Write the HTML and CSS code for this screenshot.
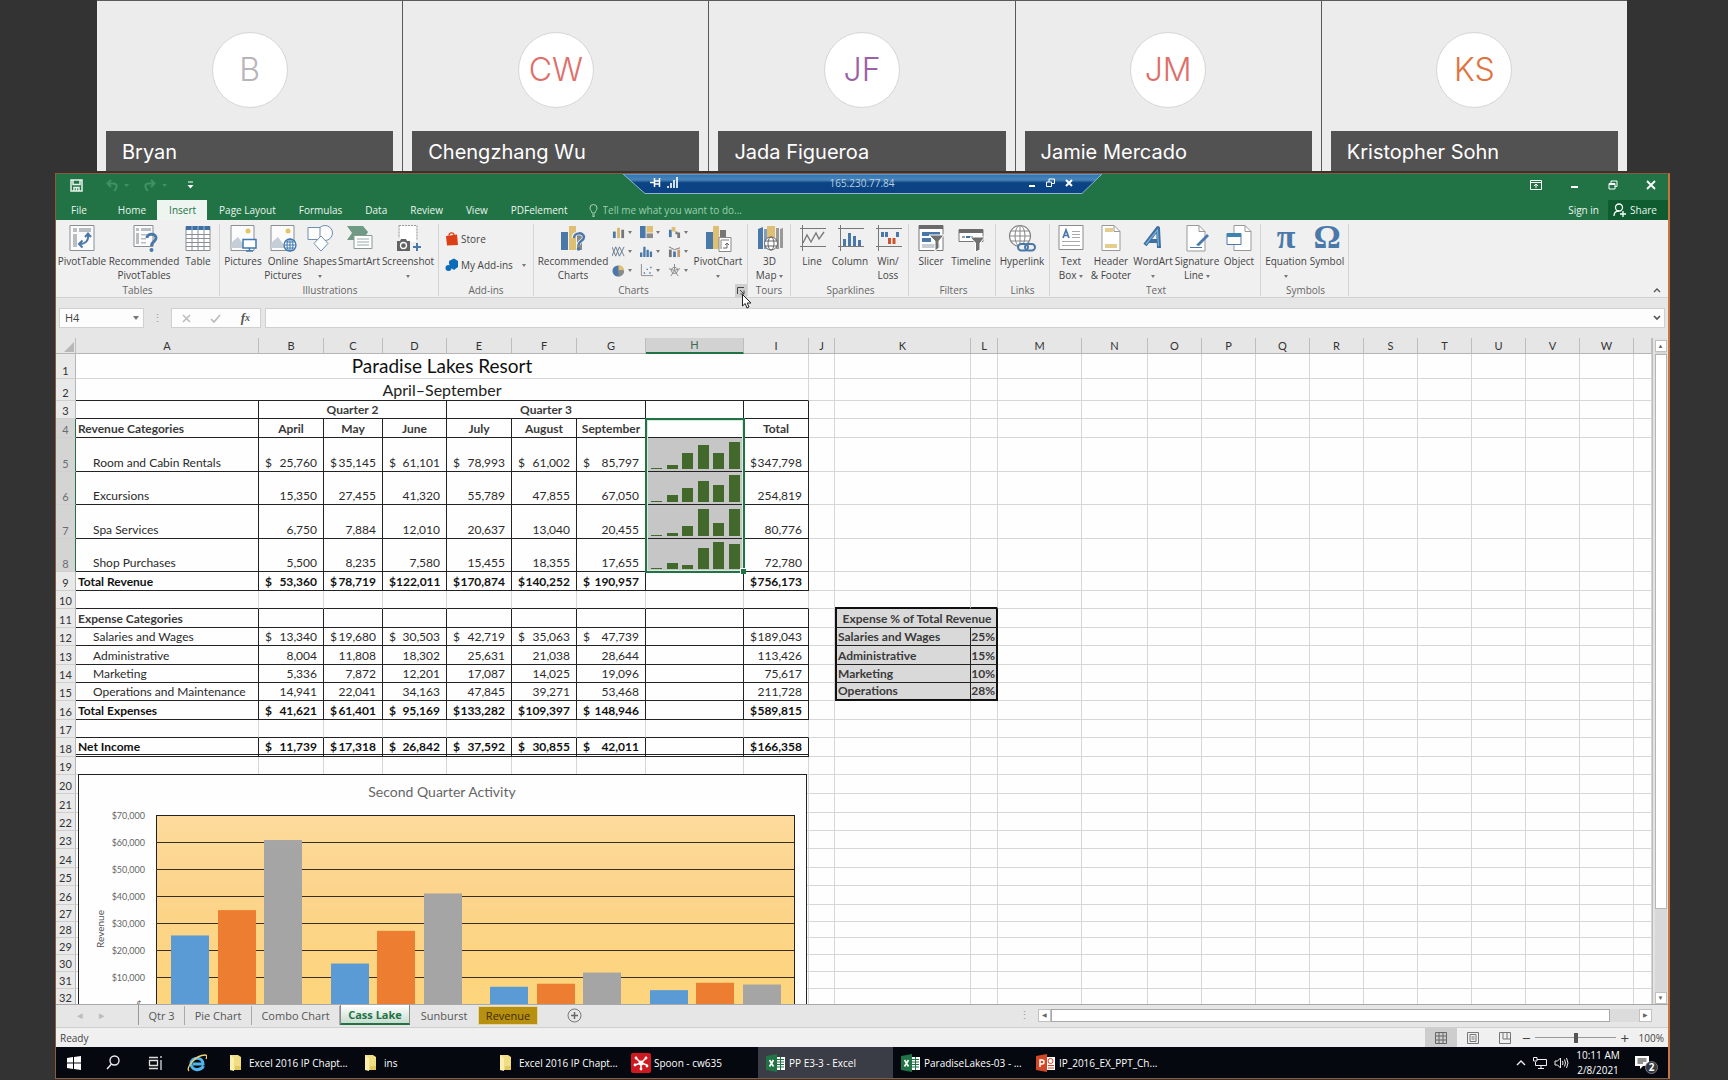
FILE: index.html
```html
<!DOCTYPE html>
<html lang="en">
<head>
<meta charset="utf-8">
<title>Shared screen - PP E3-3 - Excel</title>
<link rel="stylesheet" href="styles.css">
</head>
<body>
<section class="people" aria-label="Participants">
  <article class="person"><div class="avatar grey">B</div><div class="person-name">Bryan</div></article>
  <article class="person"><div class="avatar red">CW</div><div class="person-name">Chengzhang Wu</div></article>
  <article class="person"><div class="avatar purple">JF</div><div class="person-name">Jada Figueroa</div></article>
  <article class="person"><div class="avatar red">JM</div><div class="person-name">Jamie Mercado</div></article>
  <article class="person"><div class="avatar orange">KS</div><div class="person-name">Kristopher Sohn</div></article>
</section>

<main class="desktop">
  <div class="remote-bar">
    <svg class="remote-shape" viewBox="0 0 479 20" preserveAspectRatio="none"><defs><linearGradient id="rdp" x1="0" y1="0" x2="0" y2="1"><stop offset="0" stop-color="#2a74b5"/><stop offset=".3" stop-color="#4a84b8"/><stop offset=".45" stop-color="#0c4383"/><stop offset="1" stop-color="#0b4285"/></linearGradient></defs><path d="M0 0H479L459 19.500H22Z" fill="url(#rdp)" stroke="#8fb3cf" stroke-width="1"/></svg>
    <button class="remote-btn" aria-label="Pin"><svg width="11" height="9" viewBox="0 0 11 9"><path d="M0 4.500H4M4.500 0V9M4 3H9M4 6H9M9.500 0V9" stroke="#fff" stroke-width="1.500" fill="none"/></svg></button>
    <svg class="signal" width="11" height="11" viewBox="0 0 11 11"><path d="M1 11V9M4 11V6M7 11V3M10 11V0" stroke="#e8f0f8" stroke-width="1.800"/></svg>
    <span class="remote-ip">165.230.77.84</span>
    <button class="remote-btn" aria-label="Minimize"><svg width="8" height="8" viewBox="0 0 8 8"><path d="M1 7H7" stroke="#fff" stroke-width="2"/></svg></button>
    <button class="remote-btn" aria-label="Restore"><svg width="9" height="9" viewBox="0 0 9 9"><path d="M.5 4H5.500V8.500H.5ZM3 4V1H8.500V5.500H5.500" fill="none" stroke="#fff"/></svg></button>
    <button class="remote-btn" aria-label="Close"><svg width="8" height="8" viewBox="0 0 8 8"><path d="M1 1L7 7M7 1L1 7" stroke="#fff" stroke-width="2"/></svg></button>
  </div>

  <header class="titlebar">
    <div class="quick">
      <button aria-label="Save"><svg width="13" height="13" viewBox="0 0 13 13"><path d="M1 1H12V12H1ZM3 1V5.500H10V1M4 12V8.500H9V12M6.500 9V12" fill="none" stroke="#e8f3ec" stroke-width="1.500"/></svg></button>
      <button aria-label="Undo" class="undo faint"><svg width="24" height="13" viewBox="0 0 24 13"><path d="M5 1L1.500 4.500L5 8M2 4.500H8C12 5 11 10 8 11.500" fill="none" stroke="currentColor" stroke-width="2"/><path d="M18 5h5l-2.500 3z" fill="currentColor"/></svg></button>
      <button aria-label="Redo" class="redo faint"><svg width="24" height="13" viewBox="0 0 24 13"><path d="M7 1L10.500 4.500L7 8M10 4.500H4C0 5 1 10 4 11.500" fill="none" stroke="currentColor" stroke-width="2"/><path d="M18 5h5l-2.500 3z" fill="currentColor"/></svg></button>
      <button aria-label="Customize"><svg width="7" height="8" viewBox="0 0 7 8"><path d="M1 1H6" stroke="#fff"/><path d="M.5 4h6L3.500 7.500z" fill="#fff"/></svg></button>
    </div>
    <div class="win-controls">
      <button aria-label="Ribbon options"><svg width="12" height="10" viewBox="0 0 12 10"><path d="M.5.5H11.500V9.500H.5ZM.5 2.500H11.500" fill="none" stroke="#fff"/><path d="M6 4V8M4 6L6 4L8 6" fill="none" stroke="#fff"/></svg></button>
      <button aria-label="Minimize"><svg width="10" height="10" viewBox="0 0 10 10"><path d="M1 7H8" stroke="#fff" stroke-width="2"/></svg></button>
      <button aria-label="Restore"><svg width="10" height="10" viewBox="0 0 10 10"><path d="M1 3.500H7V9H1ZM1 4.500H7M3 3V1H9V6.500H7" fill="none" stroke="#fff"/></svg></button>
      <button aria-label="Close"><svg width="10" height="10" viewBox="0 0 10 10"><path d="M1 1L9 9M9 1L1 9" stroke="#fff" stroke-width="1.800"/></svg></button>
    </div>
  </header>

  <nav class="tabs">
    <button class="tab file">File</button><button class="tab">Home</button><button class="tab active">Insert</button><button class="tab">Page Layout</button><button class="tab">Formulas</button><button class="tab">Data</button><button class="tab">Review</button><button class="tab">View</button><button class="tab">PDFelement</button>
    <label class="tell"><svg width="9" height="13" viewBox="0 0 9 13"><path d="M3 9C3 7 1 6.500 1 4A3.500 3.500 0 0 1 8 4C8 6.500 6 7 6 9ZM3 11H6M3.500 12.500H5.500" fill="none" stroke="#a9d5b6"/></svg><input type="text" placeholder="Tell me what you want to do..."></label>
    <a class="signin" href="#">Sign in</a>
    <button class="share"><svg width="13" height="14" viewBox="0 0 13 14"><circle cx="6" cy="4.500" r="3.500" fill="none" stroke="#fff" stroke-width="1.300"/><path d="M1 13C1 10 3 8 6 8M10 8V14M7 11H13" fill="none" stroke="#fff" stroke-width="1.300"/></svg>Share</button>
  </nav>

  <section class="ribbon" aria-label="Insert">
    <div class="group g-tables"><div class="tools">
      <button class="tool w52"><svg viewBox="0 0 28 28"><path d="M2 1.500H26V26.500H2Z" fill="#fbfbfb" stroke="#8a8f94"/><path d="M5 4h4v4H5zM11 4h12v4H11zM5 10h4v13H5z" fill="#b9bec3"/><path d="M20 10C21 16 18 20 12 20M17 13L20 9.500L23 13M14.500 16.500L11 20L14.500 23.500" fill="none" stroke="#4a79a9" stroke-width="2"/></svg><span>PivotTable</span></button>
      <button class="tool w72"><svg viewBox="0 0 28 28"><path d="M4 1.500H23V22.500H4Z" fill="#fbfbfb" stroke="#8a8f94"/><path d="M6 4h3v3H6zM11 4h10v3H11zM6 9h3v11H6zM11 10h6v1.500h-6zM11 14h5v1.500h-5zM11 18h5v1.500h-5z" fill="#b9bec3"/><path d="M17 14C17 9 26 9 26 14C26 18 21.500 17 21.500 22" fill="none" stroke="#4a79a9" stroke-width="3"/><circle cx="21.500" cy="26" r="2" fill="#4a79a9"/></svg><span>Recommended<br>PivotTables</span></button>
      <button class="tool w36"><svg viewBox="0 0 28 28"><path d="M2 2.500H26V26.500H2Z" fill="#fff" stroke="#8a8f94"/><path d="M2 2h24v4H2z" fill="#3e6fa0"/><path d="M2 10.500H26M2 14.500H26M2 18.500H26M2 22.500H26M8 6V26M14 6V26M20 6V26" stroke="#8a8f94"/><path d="M8 2v4M14 2v4M20 2v4" stroke="#9db9d5"/></svg><span>Table</span></button>
    </div><h2>Tables</h2></div>

    <div class="group g-illus"><div class="tools">
      <button class="tool w42"><svg viewBox="0 0 28 28"><path d="M2 1.500H25V26.500H2Z" fill="#fbfbfb" stroke="#8a8f94"/><circle cx="19" cy="7" r="2.500" fill="#e4c467"/><path d="M2 24V19L9 13L17 24Z" fill="#c5cdd6"/><path d="M14 15.500H27V24H14Z" fill="#fff" stroke="#3f78ae" stroke-width="1.500"/><path d="M17 27H24M20.500 24V27" stroke="#3f78ae" stroke-width="1.500"/></svg><span>Pictures</span></button>
      <button class="tool w38"><svg viewBox="0 0 28 28"><path d="M2 1.500H25V26.500H2Z" fill="#fbfbfb" stroke="#8a8f94"/><circle cx="19" cy="7" r="2.500" fill="#e4c467"/><path d="M2 24V19L9 13L17 24Z" fill="#c5cdd6"/><circle cx="21" cy="21" r="6" fill="#fff" stroke="#3f78ae" stroke-width="1.300"/><path d="M15 21H27M21 15V27M16.500 18H25.500M16.500 24H25.500" stroke="#3f78ae"/><ellipse cx="21" cy="21" rx="3" ry="6" fill="none" stroke="#3f78ae"/></svg><span>Online<br>Pictures</span></button>
      <button class="tool w36"><svg viewBox="0 0 28 28"><circle cx="19" cy="9" r="7.500" fill="#fdfdfd" stroke="#6f8fb0"/><path d="M2 3.500H14V15.500H2Z" fill="#fdfdfd" stroke="#6f8fb0"/><path d="M15 12L22 19.500L15 27L8 19.500Z" fill="#fff" stroke="#6f8fb0"/></svg><span>Shapes<br><i class="caret"></i></span></button>
      <button class="tool w42"><svg viewBox="0 0 28 28"><path d="M2 2H18L23 8L18 16H2L7 9Z" fill="#6f9a83"/><path d="M9 11.500H27V24.500H9Z" fill="#fff" stroke="#8a9a92"/><path d="M12 15H24M12 18H24M12 21H24" stroke="#9aa"/></svg><span>SmartArt</span></button>
      <button class="tool w56"><svg viewBox="0 0 28 28"><path d="M5 1.500H23V16" fill="none" stroke="#9a9a9a" stroke-dasharray="2 1"/><path d="M5 1.500V14" stroke="#9a9a9a" stroke-dasharray="2 1"/><path d="M6 2h16v16H6z" fill="#fff"/><path d="M3 17h3l1-2h5l1 2h3v10H3z" fill="#636363"/><circle cx="9.500" cy="21.500" r="3" fill="none" stroke="#fff" stroke-width="1.300"/><path d="M23 19V27M19 23H27" stroke="#4a79a9" stroke-width="2"/></svg><span>Screenshot<br><i class="caret"></i></span></button>
    </div><h2>Illustrations</h2></div>

    <div class="group g-addins"><div class="addins">
      <button><svg width="14" height="14" viewBox="0 0 14 14"><path d="M1 4L12 2.500L13 13L2 13.500Z" fill="#dc3e15"/><path d="M4 3.500C4 0 9 0 9 3" fill="none" stroke="#dc3e15" stroke-width="1.300"/></svg>Store</button>
      <button><svg width="14" height="14" viewBox="0 0 14 14"><path d="M4 3L9 .5L13 3V9L9 12L6 10L4 6Z" fill="#0d6cb9"/><circle cx="3.500" cy="10" r="3" fill="#0d6cb9"/></svg>My Add-ins<i class="caret"></i></button>
    </div><h2>Add-ins</h2></div>

    <div class="group g-charts"><div class="tools">
      <button class="tool w74"><svg viewBox="0 0 28 28"><path d="M2 8h7v18H2z" fill="#4a79a9"/><path d="M10 2h7v24h-7z" fill="#dfbf72"/><path d="M18 8h5v18h-5z" fill="#8a8a8a"/><path d="M14.500 14C14 8 25 8 25 13C25 17 19.500 17 19.500 21" fill="none" stroke="#f0f0f0" stroke-width="4"/><path d="M15 14C15 8 25 8 25 13C25 17 19.500 17 19.500 21" fill="none" stroke="#4a79a9" stroke-width="2.500"/><circle cx="19.500" cy="25" r="1.800" fill="#4a79a9"/></svg><span>Recommended<br>Charts</span></button>
      <div class="mini">
        <button aria-label="Column chart"><svg viewBox="0 0 14 14"><path d="M1 6h3v7H1z" fill="#4a79a9"/><path d="M5.500 2h3v11h-3z" fill="#d9b76a"/><path d="M10 4h3v9h-3z" fill="#777"/></svg><i class="caret"></i></button>
        <button aria-label="Hierarchy chart"><svg viewBox="0 0 14 14"><path d="M0 0h6v13H0z" fill="#4a79a9"/><path d="M7 0h7v7H7z" fill="#dfbf72"/><path d="M7 8h7v5H7z" fill="#8a8a8a"/></svg><i class="caret"></i></button>
        <button aria-label="Waterfall chart"><svg viewBox="0 0 14 14"><path d="M1 4h3v8H1z" fill="#4a79a9"/><path d="M4 1h4v5H4z" fill="#dfbf72"/><path d="M8 6h2v3H8zM10 7h3v6h-3z" fill="#777"/></svg><i class="caret"></i></button>
        <button aria-label="Line chart"><svg viewBox="0 0 14 14"><path d="M0 12L4 2L8 12L13 2" fill="none" stroke="#4a79a9"/><path d="M0 2L4 12L8 2L13 12" fill="none" stroke="#777"/></svg><i class="caret"></i></button>
        <button aria-label="Statistic chart"><svg viewBox="0 0 14 14"><path d="M0 8h2.500v5H0zM3.500 2H6v11H3.500zM7 5h2.500v8H7zM10.500 7H13v6h-2.500z" fill="#4a79a9"/></svg><i class="caret"></i></button>
        <button aria-label="Combo chart"><svg viewBox="0 0 14 14"><path d="M1 5h3v8H1z" fill="#777"/><path d="M5.500 7h3v6h-3z" fill="#4a79a9"/><path d="M10 5h3v8h-3z" fill="#c79a76"/><path d="M1 2L7 5L13 3" fill="none" stroke="#777"/></svg><i class="caret"></i></button>
        <button aria-label="Pie chart"><svg viewBox="0 0 14 14"><circle cx="6.500" cy="7.500" r="6" fill="#4a79a9"/><path d="M7 7V1A6 6 0 0 1 13 7Z" fill="#dfbf72"/><path d="M7 7H13A6 6 0 0 1 7 13.500Z" fill="#8a8a8a"/></svg><i class="caret"></i></button>
        <button aria-label="Scatter chart"><svg viewBox="0 0 14 14"><path d="M1.500 0V12.500H14" fill="none" stroke="#888"/><path d="M4 9h1.500v1.500H4zM7 5h1.500v1.500H7zM11 3h1.500v1.500H11zM10 9h1.500v1.500H10z" fill="#4a79a9"/></svg><i class="caret"></i></button>
        <button aria-label="Radar chart"><svg viewBox="0 0 14 14"><path d="M7 0V7L13 5M7 7L11 13M7 7L3 13M7 7L1 5M7 3L11 6L9 10H5L3 6Z" fill="none" stroke="#888"/></svg><i class="caret"></i></button>
      </div>
      <button class="tool w56"><svg viewBox="0 0 28 28"><path d="M2 8h7v17H2z" fill="#4a79a9"/><path d="M9 2h6v23H9z" fill="#dfbf72"/><path d="M16 6h6v8h-6z" fill="#777"/><path d="M15 13.500H27V27.500H15Z" fill="#fff" stroke="#8a8a8a"/><path d="M17 16h8M17 16v9" stroke="#aaa" stroke-width="1.500"/><path d="M19 24H23V19M21 21L23 19L25 21" fill="none" stroke="#666"/></svg><span>PivotChart<br><i class="caret"></i></span></button>
    </div><h2>Charts</h2>
      <button class="launcher" aria-label="See all charts"><svg width="8" height="8" viewBox="0 0 8 8"><path d="M.5 7V.5H7M3 3L7 7M7 3.500V7H3.500" fill="none" stroke="#444"/></svg></button>
      <svg class="cursor" width="10" height="15" viewBox="0 0 10 15"><path d="M.5.500V12L3.200 9.500L5 14L7 13L5.200 9H9Z" fill="#fff" stroke="#222"/></svg>
    </div>

    <div class="group g-tours"><div class="tools">
      <button class="tool w43"><svg viewBox="0 0 28 28"><path d="M2 5l5-2v22H2z" fill="#4a79a9"/><path d="M8 5h3v20H8z" fill="#7fa0c1"/><path d="M11 2h8v12h-8z" fill="#dfbf72"/><path d="M20 4h3v21h-3zM24 5l3-1v20h-3z" fill="#999"/><circle cx="15" cy="19.500" r="6.500" fill="#fff" stroke="#666"/><ellipse cx="15" cy="19.500" rx="3" ry="6.500" fill="none" stroke="#666"/><path d="M9 17H21M9 22H21" stroke="#666"/></svg><span>3D<br>Map <i class="caret"></i></span></button>
    </div><h2>Tours</h2></div>

    <div class="group g-spark"><div class="tools">
      <button class="tool w38"><svg viewBox="0 0 28 28"><path d="M2 4.500H28M2 22.500H28M4.500 1V27" stroke="#777"/><path d="M5 19L9 11L13 18L18 9L21 15L26 8" fill="none" stroke="#777" stroke-width="1.300"/></svg><span>Line</span></button>
      <button class="tool w38"><svg viewBox="0 0 28 28"><path d="M2 4.500H28M2 22.500H28M4.500 1V27" stroke="#777"/><path d="M7 15h3v7H7zM12 9h3v13h-3zM17 12h3v10h-3zM22 16h3v6h-3z" fill="#4a79a9"/></svg><span>Column</span></button>
      <button class="tool w38"><svg viewBox="0 0 28 28"><path d="M2 4.500H28M2 22.500H28M4.500 1V27" stroke="#777"/><path d="M7 8h3v5H7zM11 8h3v5h-3zM22 8h3v5h-3z" fill="#4a79a9"/><path d="M14 14h3v6h-3zM18.500 14h3v6h-3z" fill="#d0532f"/></svg><span>Win/<br>Loss</span></button>
    </div><h2>Sparklines</h2></div>

    <div class="group g-filters"><div class="tools">
      <button class="tool w38"><svg viewBox="0 0 28 28"><path d="M2 1.500H26V26.500H2Z" fill="#fff" stroke="#777"/><path d="M2 1h24v4H2z" fill="#6a6a6a"/><path d="M5 8h18v4H5zM5 14h9v4H5z" fill="#4a79a9"/><path d="M5 20h18v4H5z" fill="#c8cdd2"/><path d="M12 11H27L22 17V24L18 27V17Z" fill="#6f6f6f" stroke="#fff"/></svg><span>Slicer</span></button>
      <button class="tool w42"><svg viewBox="0 0 28 28"><path d="M2 5.500H26V17.500H2Z" fill="#fff" stroke="#777"/><path d="M2 5h24v4H2z" fill="#6a6a6a"/><path d="M5 12h3v2H5z" fill="#999"/><path d="M9 12h7v2H9z" fill="#3e6fa0"/><path d="M13 13H28L23 19V26L18.500 28V19Z" fill="#6f6f6f" stroke="#fff"/></svg><span>Timeline</span></button>
    </div><h2>Filters</h2></div>

    <div class="group g-links"><div class="tools">
      <button class="tool w52"><svg viewBox="0 0 28 28"><circle cx="12" cy="12" r="10.500" fill="#fff" stroke="#888" stroke-width="1.200"/><ellipse cx="12" cy="12" rx="5" ry="10.500" fill="none" stroke="#888"/><path d="M1.500 12H22.500M12 1.500V22.500M3 7H21M3 17H21" stroke="#888"/><rect x="10" y="20" width="10" height="6.500" rx="3.200" fill="#eee" stroke="#4a79a9" stroke-width="2"/><rect x="17" y="20" width="10" height="6.500" rx="3.200" fill="none" stroke="#4a79a9" stroke-width="2"/></svg><span>Hyperlink</span></button>
    </div><h2>Links</h2></div>

    <div class="group g-text"><div class="tools">
      <button class="tool w38"><svg viewBox="0 0 28 28"><path d="M2 1.500H26V25.500H2Z" fill="#fff" stroke="#8a8a8a"/><path d="M6 14L9 6L12 14M7 11.500H11" fill="none" stroke="#4a79a9" stroke-width="1.700"/><path d="M15 7.500H23M15 10.500H23M15 13.500H23M5 17.500H23M5 21.500H23" stroke="#aaa"/></svg><span>Text<br>Box <i class="caret"></i></span></button>
      <button class="tool w42"><svg viewBox="0 0 28 28"><path d="M5 1.500H17L23 7.500V26.500H5Z" fill="#fff" stroke="#999"/><path d="M17 1.500V7.500H23" fill="none" stroke="#999"/><path d="M8 4h8v4H8zM8 20h12v4H8z" fill="#e5cd8e"/></svg><span>Header<br>&amp; Footer</span></button>
      <button class="tool w42"><svg viewBox="0 0 28 28"><path d="M6 21L19 4L20 24M9 17H20" fill="none" stroke="#3f6fa0" stroke-width="4" stroke-linejoin="round"/><path d="M7 20L18.500 6L19.500 22" fill="none" stroke="#79b2da" stroke-width="1.200"/></svg><span>WordArt<br><i class="caret"></i></span></button>
      <button class="tool w46"><svg viewBox="0 0 28 28"><path d="M4 1.500H16L22 7.500V27H4Z" fill="#fff" stroke="#999"/><path d="M16 1.500V7.500H22" fill="none" stroke="#999"/><path d="M7 23.500H19" stroke="#4a79a9"/><path d="M13 21L24 10L26 12L16 22Z" fill="#4a79a9"/></svg><span>Signature<br>Line <i class="caret"></i></span></button>
      <button class="tool w38"><svg viewBox="0 0 28 28"><path d="M9 1.500H20L26 7.500V26.500H9Z" fill="#fff" stroke="#999"/><path d="M20 1.500V7.500H26" fill="none" stroke="#999"/><path d="M2 9.500H16V20.500H2Z" fill="#fff" stroke="#4a79a9"/><path d="M2 9h14v4H2z" fill="#3c86ae"/></svg><span>Object</span></button>
    </div><h2>Text</h2></div>

    <div class="group g-symbols"><div class="tools">
      <button class="tool w46"><b class="glyph">π</b><span>Equation<br><i class="caret"></i></span></button>
      <button class="tool w36"><b class="glyph">Ω</b><span>Symbol</span></button>
    </div><h2>Symbols</h2></div>
    <button class="collapse" aria-label="Collapse ribbon"><svg width="8" height="6" viewBox="0 0 8 6"><path d="M1 5L4 2L7 5" fill="none" stroke="#555" stroke-width="1.300"/></svg></button>
  </section>

  <div class="formula-row">
    <div class="namebox"><input type="text" value="H4" aria-label="Name box"><i class="caret big"></i></div>
    <span class="grip">⋮</span>
    <div class="fxbox">
      <button aria-label="Cancel"><svg width="9" height="9" viewBox="0 0 9 9"><path d="M1 1L8 8M8 1L1 8" stroke="#bbb" stroke-width="1.500"/></svg></button>
      <button aria-label="Enter"><svg width="11" height="9" viewBox="0 0 11 9"><path d="M1 5L4 8L10 1" fill="none" stroke="#bbb" stroke-width="1.700"/></svg></button>
      <button class="fx" aria-label="Insert function">f<small>x</small></button>
    </div>
    <div class="formula"><input type="text" aria-label="Formula bar"><svg width="8" height="6" viewBox="0 0 8 6"><path d="M1 1L4 4L7 1" fill="none" stroke="#555" stroke-width="1.700"/></svg></div>
  </div>

  <section class="sheet-area">
    <div class="sheet">
      <table id="grid"></table>
      <div class="selection"></div>
      <figure class="chart">
        <svg id="chart" width="729" height="300" viewBox="0 0 729 300"></svg>
      </figure>
    </div>
    <div class="vscroll"><button aria-label="Scroll up">▲</button><div class="vtrack"><div class="vthumb"></div></div><button aria-label="Scroll down">▼</button></div>
  </section>

  <div class="sheet-tabs">
    <span class="navs"><i>◂</i><i>▸</i></span>
    <button class="st w46">Qtr 3</button><button class="st w67">Pie Chart</button><button class="st w88">Combo Chart</button><button class="st w70 current">Cass Lake</button><button class="st w68 plain">Sunburst</button><button class="st w60 gold">Revenue</button>
    <button class="add" aria-label="New sheet"><svg width="15" height="15" viewBox="0 0 15 15"><circle cx="7.500" cy="7.500" r="6.500" fill="none" stroke="#777"/><path d="M7.500 4V11M4 7.500H11" stroke="#666" stroke-width="1.500"/></svg></button>
    <div class="hscroll"><span class="grip">⋮</span><button aria-label="Scroll left">◀</button><div class="htrack"><div class="hthumb"></div></div><button aria-label="Scroll right">▶</button></div>
  </div>

  <div class="status">
    <span class="ready">Ready</span>
    <button class="view on" aria-label="Normal"><svg width="12" height="12" viewBox="0 0 12 12"><path d="M.5.500H11.500V11.500H.5ZM.5 4H11.500M.5 8H11.500M4 .5V11.500M8 .5V11.500" fill="none" stroke="#666"/></svg></button>
    <button class="view" aria-label="Page layout"><svg width="12" height="12" viewBox="0 0 12 12"><path d="M.5.500H11.500V11.500H.5ZM3 2.500H9V9.500H3ZM4.500 5H7.500M4.500 7H7.500" fill="none" stroke="#777"/></svg></button>
    <button class="view" aria-label="Page breaks"><svg width="12" height="12" viewBox="0 0 12 12"><path d="M.5.500H11.500V11.500H.5ZM4 .5V7H11.500M8 .5V7" fill="none" stroke="#777"/></svg></button>
    <div class="zoomer"><span>−</span><input type="range" min="10" max="190" value="100" aria-label="Zoom"><span>+</span></div>
    <span class="pct">100%</span>
  </div>

  <footer class="taskbar">
    <button class="tk" aria-label="Start"><svg width="14" height="14" viewBox="0 0 14 14"><path d="M0 2L6 1V6.500H0ZM7 1L14 0V6.500H7ZM0 7.500H6V13L0 12ZM7 7.500H14V14L7 13Z" fill="#fff"/></svg></button>
    <button class="tk" aria-label="Search"><svg width="14" height="15" viewBox="0 0 14 15"><circle cx="8.500" cy="5.500" r="4.500" fill="none" stroke="#eee" stroke-width="1.400"/><path d="M5.500 9L1 14" stroke="#eee" stroke-width="1.400"/></svg></button>
    <button class="tk" aria-label="Task view"><svg width="15" height="14" viewBox="0 0 15 14"><path d="M1 1.500H10M1 12.500H10M1.500 4.500H9.500V9.500H1.500ZM13 4V14M13 0V2" fill="none" stroke="#ddd" stroke-width="1.300"/></svg></button>
    <button class="tk" aria-label="Internet Explorer"><svg width="20" height="20" viewBox="0 0 20 20"><path d="M16.500 13C13 19 4 17 4 10.500C4 4 16 3 16 11H6" fill="none" stroke="#4fb5ea" stroke-width="3"/><path d="M2 18C-1 15 8 2 18 2C20 2 20 4 19 6" fill="none" stroke="#f0d269" stroke-width="1.300"/></svg></button>
    <button class="task"><svg viewBox="0 0 20 20"><path d="M4 2h8l3 2v13H4z" fill="#f1dd84"/><path d="M4 2l4 3v13l-4-1z" fill="#fbefb0"/><path d="M9 13h6v4H9z" fill="#e5c85e"/></svg><span>Excel 2016 IP Chapt...</span></button>
    <button class="task"><svg viewBox="0 0 20 20"><path d="M4 2h8l3 2v13H4z" fill="#f1dd84"/><path d="M4 2l4 3v13l-4-1z" fill="#fbefb0"/><path d="M9 13h6v4H9z" fill="#e5c85e"/></svg><span>ins</span></button>
    <button class="task"><svg viewBox="0 0 20 20"><path d="M4 2h8l3 2v13H4z" fill="#f1dd84"/><path d="M4 2l4 3v13l-4-1z" fill="#fbefb0"/><path d="M9 13h6v4H9z" fill="#e5c85e"/></svg><span>Excel 2016 IP Chapt...</span></button>
    <button class="task"><svg viewBox="0 0 20 20"><rect width="20" height="20" rx="2" fill="#cf1820"/><path d="M10 10L5 5M10 10L15 5M10 10L4 12M10 10L16 12M10 10L10 16" stroke="#fff" stroke-width="1.500"/><circle cx="10" cy="10" r="2.500" fill="#fff"/><circle cx="5" cy="5" r="1.400" fill="#fff"/><circle cx="15" cy="5" r="1.400" fill="#fff"/><circle cx="4" cy="12" r="1.400" fill="#fff"/><circle cx="16" cy="13" r="1.400" fill="#fff"/><circle cx="10" cy="16" r="1.400" fill="#fff"/></svg><span>Spoon - cw635</span></button>
    <button class="task on"><svg viewBox="0 0 20 20"><path d="M10 4h9v13h-9z" fill="#fff"/><path d="M11 6.500H18M11 9H18M11 11.500H18M11 14H18M14.500 4V17" stroke="#217346"/><path d="M0 3L11 1V19L0 17Z" fill="#217346"/><path d="M3.500 7L7.500 13.500M7.500 7L3.500 13.500" stroke="#fff" stroke-width="1.600"/></svg><span>PP E3-3 - Excel</span></button>
    <button class="task"><svg viewBox="0 0 20 20"><path d="M10 4h9v13h-9z" fill="#fff"/><path d="M11 6.500H18M11 9H18M11 11.500H18M11 14H18M14.500 4V17" stroke="#217346"/><path d="M0 3L11 1V19L0 17Z" fill="#217346"/><path d="M3.500 7L7.500 13.500M7.500 7L3.500 13.500" stroke="#fff" stroke-width="1.600"/></svg><span>ParadiseLakes-03 - ...</span></button>
    <button class="task"><svg viewBox="0 0 20 20"><path d="M10 4h9v13h-9z" fill="#fff"/><path d="M12 12.500H18M12 15H18" stroke="#d24726"/><circle cx="14.500" cy="8" r="2.500" fill="none" stroke="#d24726"/><path d="M0 3L11 1V19L0 17Z" fill="#d24726"/><path d="M4 14V7H6A2 2 0 0 1 6 11H4" fill="none" stroke="#fff" stroke-width="1.500"/></svg><span>IP_2016_EX_PPT_Ch...</span></button>
    <div class="tray">
      <svg width="10" height="6" viewBox="0 0 10 6"><path d="M1 5L5 1L9 5" fill="none" stroke="#eee" stroke-width="1.400"/></svg>
      <svg width="14" height="12" viewBox="0 0 14 12"><path d="M4 2.500H13.500V8.500H2.500V5M8 8.500V11.500M5 11.500H11M.5.500H4V4H.5Z" fill="none" stroke="#eee"/></svg>
      <svg width="15" height="12" viewBox="0 0 15 12"><path d="M1 4H3.500L6.500 1V11L3.500 8H1ZM8.500 4Q9.500 6 8.500 8M10.500 2.500Q12.500 6 10.500 9.500M12.500 1Q15.500 6 12.500 11" fill="none" stroke="#eee"/></svg>
      <time>10:11 AM<br>2/8/2021</time>
      <span class="notes"><svg width="14" height="14" viewBox="0 0 14 14"><path d="M0 0H14V10H8L5 13V10H0Z" fill="#fff"/><path d="M2.500 3H11.500M2.500 5H11.500M2.500 7H8" stroke="#222"/></svg><b>2</b></span>
    </div>
  </footer>
</main>
<script src="app.js"></script>
</body>
</html>
```

FILE: styles.css
```css
* { box-sizing: border-box; }
body {
  margin: 0;
  height: 100vh;
  min-height: 720px;
  display: flex;
  flex-direction: column;
  overflow: hidden;
  background: #333;
  font: 11px/14px "Open Sans", "Noto Sans", sans-serif;
  color: #444;
}
button {
  border: 0;
  padding: 0;
  background: none;
  font: inherit;
  color: inherit;
  display: flex;
  align-items: center;
  justify-content: center;
}
input { font: inherit; color: inherit; border: 0; outline: 0; background: none; padding: 0; min-width: 0; }
svg { flex: none; }
.caret {
  display: inline-block;
  width: 0;
  height: 0;
  border: 2px solid transparent;
  border-top: 3px solid #777;
  border-bottom: 0;
  vertical-align: middle;
}
.caret.big { border-width: 4px 3px 0; }

/* participants */
.people { display: flex; gap: 1px; height: 171px; flex: none; margin: 0 101px 2px 97px; padding-top: 1px; background: #5b5959; }
.person { flex: 1; display: flex; flex-direction: column; align-items: center; justify-content: space-between; background: #ececec; padding: 31px 9px 0; }
.avatar {
  width: 76px; height: 76px;
  border: 1px solid #d8d4d8; border-radius: 50%;
  background: #fff;
  display: flex; align-items: center; justify-content: center;
  font: 300 32px/40px Inter, "Liberation Sans", sans-serif;
}
.grey { color: #b9b4ba; }
.red { color: #de6f6b; }
.purple { color: #9a62a4; }
.orange { color: #e07440; }
.person-name { align-self: stretch; height: 40px; background: #535253; color: #fff; font: 20px/42px Inter, "Liberation Sans", sans-serif; padding-left: 16px; }

/* remote desktop window */
.desktop {
  position: relative;
  flex: 1;
  min-height: 0;
  display: flex;
  flex-direction: column;
  margin: 0 58px 1px 55px;
  border: 1px solid #8c5a3c;
  border-right: 2px solid #c9743d;
  background: #e6e6e6;
}
.remote-bar {
  position: absolute;
  z-index: 2;
  left: 50%;
  top: 0;
  width: 479px;
  height: 20px;
  margin-left: -239px;
  padding: 0 29px 3px 27px;
  display: flex;
  align-items: center;
  gap: 10px;
}
.remote-shape { position: absolute; inset: 0; width: 100%; height: 100%; }
.remote-bar > :not(.remote-shape) { position: relative; }
.remote-ip { flex: 1; text-align: center; font-size: 10px; color: #b9cfe4; padding-left: 18px; }
.signal { margin-left: -4px; }

.titlebar { height: 26px; flex: none; display: flex; justify-content: space-between; background: #217346; padding: 0 12px 4px 14px; }
.quick, .win-controls { display: flex; align-items: center; }
.faint { color: #3f9162; }
.undo { margin-left: 23px; }
.redo { margin: 0 19px 0 14px; }
.win-controls { gap: 28px; }

.tabs { height: 20px; flex: none; display: flex; background: #217346; color: #e9f5ed; font-size: 10px; }
.tab { padding: 0 11px 0 12px; }
.tab.file { padding: 0 19px 0 15px; }
.tab.active { background: #eef4f0; color: #217346; }
.tell { display: flex; flex: 1; align-items: center; gap: 5px; padding-left: 10px; }
.tell input { flex: 1; }
.tell input::placeholder { color: #9ccfab; opacity: 1; }
.signin { color: inherit; text-decoration: none; line-height: 20px; margin-right: 9px; }
.share { width: 60px; gap: 4px; background: #0e5c2f; padding-right: 6px; }

/* ribbon */
.ribbon { height: 78px; flex: none; display: flex; background: #f0f0f0; border-bottom: 1px solid #d2d2d2; padding-top: 4px; position: relative; }
.group { position: relative; display: flex; flex-direction: column; justify-content: space-between; border-right: 1px solid #d5d5d5; margin-bottom: 1px; flex: none; }
.group h2 { margin: 0; font-size: 10px; line-height: 11px; font-weight: 400; color: #666; text-align: center; }
.g-tables { width: 164px; }
.g-illus { width: 219px; padding-left: 2px; }
.g-addins { width: 95px; }
.g-charts { width: 214px; padding-left: 2px; }
.g-charts h2 { padding-right: 16px; }
.g-tours { width: 43px; }
.g-spark { width: 118px; padding-left: 2px; }
.g-filters { width: 87px; padding-left: 3px; }
.g-links { width: 54px; }
.g-text { width: 211px; padding-left: 2px; }
.g-symbols { width: 88px; padding-left: 2px; }
.tools { display: flex; align-items: flex-start; }
.tool { flex-direction: column; justify-content: flex-start; white-space: nowrap; flex: none; }
.tool svg { width: 28px; height: 28px; }
.tool span { line-height: 14px; margin-top: 2px; font-size: 10px; }
.glyph { height: 28px; font: 700 34px/26px "Liberation Serif", serif; color: #4a79a9; }
.w36 { width: 36px; } .w38 { width: 38px; } .w42 { width: 42px; } .w43 { width: 43px; } .w46 { width: 46px; }
.w52 { width: 52px; } .w56 { width: 56px; } .w72 { width: 72px; } .w74 { width: 74px; }
.addins { display: flex; flex-direction: column; align-items: flex-start; gap: 12px; padding: 8px 0 0 6px; font-size: 10px; }
.addins button { gap: 2px; }
.addins .caret { margin-left: 7px; }
.mini { display: grid; grid-template-columns: repeat(3, 28px); grid-auto-rows: 19px; width: 80px; padding: 2px 0 0 2px; }
.mini button { justify-content: flex-start; align-items: flex-start; gap: 3px; }
.mini svg { width: 13px; height: 13px; }
.mini .caret { margin-top: 5px; }
.launcher { position: absolute; right: 0; bottom: -1px; width: 12px; height: 13px; background: #cfcfcf; }
.cursor { position: absolute; z-index: 3; right: -5px; bottom: -13px; }
.collapse { position: absolute; right: 7px; bottom: 4px; }

.formula-row { flex: none; display: flex; padding: 10px 3px 10px; background: #e6e6e6; }
.formula-row > div { height: 20px; background: #fdfdfd; border: 1px solid #d0d0d0; display: flex; align-items: center; }
.namebox { width: 85px; padding: 0 4px 0 5px; }
.namebox input { flex: 1; }
.grip { width: 27px; text-align: center; color: #999; line-height: 20px; }
.fxbox { width: 90px; padding: 0 10px 0 10px; justify-content: space-between; margin-right: 4px; }
.fx { font: italic 700 13px/16px "Liberation Serif", serif; color: #555; }
.fx small { font-size: 10px; }
.formula { flex: 1; padding-right: 3px; }
.formula input { flex: 1; }

/* grid */
.sheet-area { flex: 1; min-height: 0; display: flex; background: #e6e6e6; }
.sheet { position: relative; flex: 1; overflow: hidden; }
table { border-collapse: separate; border-spacing: 0; table-layout: fixed; width: 100%; font: 12px/16px Lato, "Open Sans", sans-serif; color: #2b2b2b; background: #fefefe; }
th, td { padding: 0; white-space: nowrap; overflow: hidden; vertical-align: bottom; border-right: 1px solid #d6d6d6; border-bottom: 1px solid #d6d6d6; }
thead th { height: 16px; font-size: 11px; line-height: 15px; font-weight: 400; background: #e6e6e6; color: #333; border-right-color: #bdbdbd; border-bottom-color: #b5b5b5; }
tbody th { font-size: 11px; line-height: 15px; font-weight: 400; background: #e9e9e9; color: #333; border-right-color: #b5b5b5; border-bottom-color: #cfcfcf; }
thead th.sel { background: #d2d2d2; color: #3c6b50; border-bottom: 2px solid #217346; line-height: 14px; }
tbody th.sel { background: #d4d4d4; color: #6a6f6c; border-right-color: #217346; }
.corner { position: relative; }
.corner svg { display: block; margin-left: 8px; }
.box { border-right-color: #222; border-bottom-color: #222; }
.under { border-bottom-color: #222; }
.double { border-bottom: 3px double #222; line-height: 15px; }
.bold { font-weight: 700; color: #111; }
.semi { font-weight: 700; color: #3a3a3a; }
.center { text-align: center; }
.label { padding-left: 2px; }
.indent { padding-left: 17px; }
.num { text-align: right; padding-right: 6px; }
.money { display: flex; justify-content: space-between; padding-left: 6px; }
.title { text-align: center; font-size: 19px; line-height: 24px; color: #111; }
.subtitle { text-align: center; font-size: 16px; line-height: 21px; color: #222; }
.filled { background: #c6c6c6; }
.filled svg { display: block; }
.pk { background: #d9d9d9; border-left: 2px solid #111; padding-left: 1px; }
.pl { background: #d9d9d9; border-right: 2px solid #111; text-align: right; padding-right: 1px; }
.pover { border-bottom: 2px solid #111; }
.ptop { border-right: 2px solid #111; text-align: center; }
.pend { border-bottom: 2px solid #111; }
.selection { position: absolute; left: 589px; top: 80px; width: 100px; height: 155px; border: 2px solid #217346; box-shadow: inset 0 0 0 1px #d5eadd; }
.selection::after { content: ""; position: absolute; right: -3px; bottom: -3px; width: 5px; height: 5px; background: #217346; border: 1px solid #fff; border-width: 1px 0 0 1px; }
.chart { position: absolute; left: 22px; top: 436px; margin: 0; }
.chart svg { display: block; font-family: Lato, "Open Sans", sans-serif; }

.vscroll { width: 16px; flex: none; display: flex; flex-direction: column; align-items: center; padding-top: 2px; border-left: 1px solid #bbb; background: #e3e3e3; }
.vscroll button, .hscroll button { width: 12px; height: 12px; background: #fff; border: 1px solid #c0c0c0; font-size: 6px; line-height: 8px; color: #666; flex: none; }
.vtrack { flex: 1; width: 12px; padding-top: 2px; background: #d8d8d8; }
.vthumb { height: 87%; background: #fff; border: 1px solid #b5b5b5; }

.sheet-tabs { height: 24px; flex: none; display: flex; align-items: stretch; background: #e6e6e6; border-top: 1px solid #a8a8a8; border-bottom: 1px solid #cfcfcf; padding-bottom: 2px; }
.navs { width: 83px; display: flex; gap: 16px; justify-content: flex-end; align-items: center; padding-right: 33px; border-right: 1px solid #999; color: #bbb; }
.navs i { font-style: normal; }
.st { border-right: 1px solid #aaa; color: #555; flex: none; margin: 1px 0 0; }
.w67 { width: 67px; } .w88 { width: 88px; } .w70 { width: 70px; } .w68 { width: 68px; } .w60 { width: 60px; }
.current { margin: 0; font-weight: 700; color: #217346; background: linear-gradient(#fff, #c9dccf); border: 1px solid #888; border-bottom: 2px solid #217346; border-top: 0; padding-top: 1px; }
.plain { border-right: 0; }
.gold { background: #b8900f; color: #3d2c00; border: 1px solid #e3d5a4; }
.add { margin-left: 29px; }
.hscroll { margin-left: auto; width: 657px; display: flex; align-items: center; padding-right: 16px; }
.hscroll button { width: 13px; height: 13px; }
.hscroll .grip { width: 27px; }
.htrack { flex: 1; height: 13px; background: #dcdcdc; }
.hthumb { height: 13px; width: 95%; background: #fff; border: 1px solid #a8a8a8; }

.status { height: 19px; flex: none; display: flex; align-items: center; background: #f0f0f0; padding: 0 4px; font-size: 10px; }
.ready { flex: 1; }
.view { width: 32px; height: 19px; }
.view.on { background: #cdcdcd; }
.zoomer { display: flex; align-items: center; width: 107px; gap: 2px; font-size: 15px; margin-left: 1px; margin-right: 1px; }
.zoomer input { flex: 1; appearance: none; height: 1px; background: #999; }
.zoomer input::-webkit-slider-thumb { appearance: none; width: 4px; height: 10px; background: #555; }
.pct { width: 34px; text-align: right; }

.taskbar { height: 31px; flex: none; display: flex; background: #05080f; color: #fff; font-size: 10px; }
.tk { width: 42px; }
.tk:first-child { width: 36px; }
.task { width: 135px; flex: 0 1 135px; justify-content: flex-start; padding-left: 8px; gap: 3px; white-space: nowrap; overflow: hidden; }
.task svg { width: 20px; height: 20px; }
.task.on { background: #3a3d45; }
.tray { margin-left: auto; display: flex; align-items: center; gap: 7px; padding-right: 11px; }
.tray time { text-align: center; line-height: 15px; width: 44px; }
.notes { position: relative; width: 22px; height: 14px; margin-left: 8px; }
.notes b { position: absolute; right: -1px; top: 5px; width: 13px; height: 13px; border-radius: 50%; background: #33373e; border: 1px solid #778; text-align: center; font-size: 10px; line-height: 11px; }
```

FILE: app.js
```js
const columns = 'ABCDEFGHIJKLMNOPQRSTUVW'.split('');
const widths = [183, 65, 59, 64, 65, 65, 69, 98, 65, 26, 136, 27, 84, 66, 54, 54, 54, 54, 54, 54, 54, 54, 54];
const heights = [25, 22, 18, 19, 34, 33, 34, 33, 19, 18, 19, 18, 19, 18, 18, 19, 18, 19, 18, 19, 19, 18, 18, 19, 18, 19, 17, 16, 17, 17, 17, 17];

// Each entry: style, label, then figures for April to September and the total.
const data = {
  5: ['indent', 'Room and Cabin Rentals', '$25,760', '$35,145', '$61,101', '$78,993', '$61,002', '$85,797', '$347,798'],
  6: ['indent', 'Excursions', '15,350', '27,455', '41,320', '55,789', '47,855', '67,050', '254,819'],
  7: ['indent', 'Spa Services', '6,750', '7,884', '12,010', '20,637', '13,040', '20,455', '80,776'],
  8: ['indent', 'Shop Purchases', '5,500', '8,235', '7,580', '15,455', '18,355', '17,655', '72,780'],
  9: ['label bold', 'Total Revenue', '$53,360', '$78,719', '$122,011', '$170,874', '$140,252', '$190,957', '$756,173'],
  11: ['label semi', 'Expense Categories', '', '', '', '', '', '', ''],
  12: ['indent', 'Salaries and Wages', '$13,340', '$19,680', '$30,503', '$42,719', '$35,063', '$47,739', '$189,043'],
  13: ['indent', 'Administrative', '8,004', '11,808', '18,302', '25,631', '21,038', '28,644', '113,426'],
  14: ['indent', 'Marketing', '5,336', '7,872', '12,201', '17,087', '14,025', '19,096', '75,617'],
  15: ['indent', 'Operations and Maintenance', '14,941', '22,041', '34,163', '47,845', '39,271', '53,468', '211,728'],
  16: ['label bold', 'Total Expenses', '$41,621', '$61,401', '$95,169', '$133,282', '$109,397', '$148,946', '$589,815'],
  18: ['label bold', 'Net Income', '$11,739', '$17,318', '$26,842', '$37,592', '$30,855', '$42,011', '$166,358']
};
const sparks = { 5: [1, 4, 16, 24, 16, 27], 6: [1, 7, 14, 21, 17, 27], 7: [1, 3, 10, 27, 13, 27], 8: [1, 6, 4, 21, 27, 25] };
const percents = { 12: ['Salaries and Wages', '25%'], 13: ['Administrative', '15%'], 14: ['Marketing', '10%'], 15: ['Operations', '28%'] };

const td = (cls, html = '', span = 1) => `<td class="${cls}" colspan="${span}">${html}</td>`;
const money = v => v[0] === '$' ? `<div class="money"><span>$</span><span>${v.slice(1)}</span></div>` : v;
const spark = values => '<svg width="98" height="30">' + values.map((h, i) =>
  `<rect x="${5 + Math.round(i * 15.6)}" y="${28 - h}" width="11" height="${h}" fill="#43682b"/>`).join('') + '</svg>';

function mainBlock(n) {
  if (n === 1) return td('title', 'Paradise Lakes Resort', 9);
  if (n === 2) return td('subtitle under', 'April–September', 9);
  if (n === 3) return td('box') + td('box center semi', 'Quarter 2', 3) + td('box center semi', 'Quarter 3', 3) + td('box') + td('box');
  if (n === 4) return td('box label semi', 'Revenue Categories') +
    ['April', 'May', 'June', 'July', 'August', 'September', '', 'Total'].map(t => td('box center semi', t)).join('');
  if (n === 10 || n === 17) return td('under').repeat(9);
  if (!data[n]) return td('').repeat(9);
  const [style, label, ...nums] = data[n];
  const weight = style.includes('bold') ? ' bold' : '';
  const end = n === 18 ? ' double' : '';
  const cells = nums.map(v => td('box num' + weight + end, money(v)));
  cells.splice(6, 0, sparks[n] ? td('box filled', spark(sparks[n])) : td('box' + end));
  return td('box ' + style + end, label) + cells.join('');
}

function sideBlock(n) {
  const j = td('');
  if (n === 10) return j + td('pover') + td('pover');
  if (n === 11) return j + td('box pk ptop semi', 'Expense % of Total Revenue', 2);
  if (!percents[n]) return j + td('') + td('');
  const end = n === 15 ? ' pend' : '';
  return j + td('box pk semi' + end, percents[n][0]) + td('box pl semi' + end, percents[n][1]);
}

document.getElementById('grid').innerHTML =
  '<colgroup><col style="width:20px">' + widths.map(w => `<col style="width:${w}px">`).join('') + '<col></colgroup>' +
  '<thead><tr><th class="corner"><svg width="10" height="12"><path d="M10 1V11H0Z" fill="#b8b8b8"/></svg></th>' +
  columns.map(c => `<th${c === 'H' ? ' class="sel"' : ''}>${c}</th>`).join('') + '<th></th></tr></thead><tbody>' +
  heights.map((h, i) => {
    const n = i + 1;
    return `<tr style="height:${h}px"><th${n > 3 && n < 9 ? ' class="sel"' : ''}>${n}</th>${mainBlock(n)}${sideBlock(n)}${td('').repeat(12)}</tr>`;
  }).join('') + '</tbody>';

// Second quarter chart
const colors = ['#5b9bd5', '#ed7d31', '#a5a5a5'];
const series = [[25760, 35145, 61101], [15350, 27455, 41320], [6750, 7884, 12010], [5500, 8235, 7580]];
const top0 = 42, step = 27, left = 78, width = 638, zero = top0 + step * 7;
let out = '<defs><linearGradient id="plot" x1="0" y1="0" x2="0" y2="1"><stop offset="0" stop-color="#fddb9c"/><stop offset=".4" stop-color="#fcd48c"/><stop offset="1" stop-color="#fdd57c"/></linearGradient></defs>' +
  '<rect x=".5" y=".5" width="728" height="320" fill="#fefefe" stroke="#222"/>' +
  '<text x="364" y="23" text-anchor="middle" font-size="14" fill="#666">Second Quarter Activity</text>' +
  '<text transform="translate(26 155) rotate(-90)" text-anchor="middle" font-size="10" fill="#555">Revenue</text>' +
  `<rect x="${left}.5" y="${top0 - 1}.5" width="${width}" height="${step * 7}" fill="url(#plot)" stroke="#222"/>`;
for (let i = 0; i <= 7; i++) {
  const y = top0 + i * step;
  if (i > 0) out += `<path d="M${left} ${y - 0.5}h${width}" stroke="#3a2f1c"/>`;
  out += `<text x="67" y="${y + 3}" text-anchor="end" font-size="9" fill="#666">${i === 7 ? '$-' : '$' + (70 - i * 10) + ',000'}</text>`;
}
series.forEach((group, g) => group.forEach((v, s) => {
  const h = v / 10000 * step;
  out += `<rect x="${left + 15 + Math.round(g * 159.5 + s * 46.500)}" y="${zero - h}" width="38" height="${h}" fill="${colors[s]}"/>`;
}));
document.getElementById('chart').innerHTML = out;
```
